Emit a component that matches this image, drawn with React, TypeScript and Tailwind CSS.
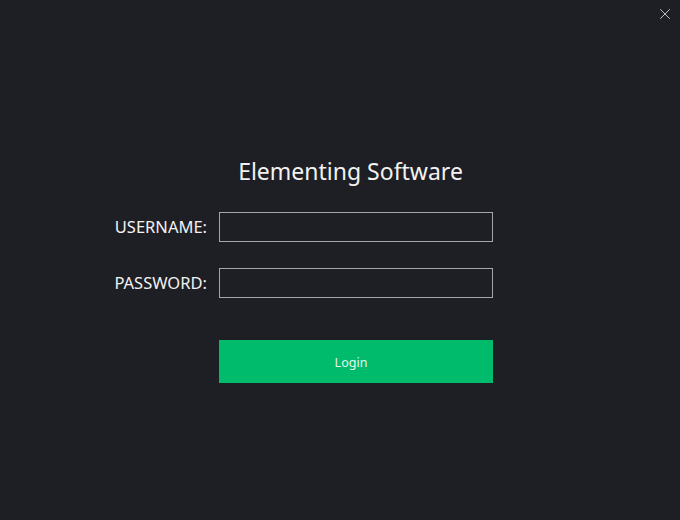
import { X } from 'lucide-react';

const fields = [
  { label: 'USERNAME:', type: 'text' },
  { label: 'PASSWORD:', type: 'password' },
];

export default function App() {
  return (
    <div
      className="relative w-[680px] h-[520px] bg-[#1e1f24] text-[#f2f2f2] overflow-hidden"
      style={{ fontFamily: '"Noto Sans", "Open Sans", sans-serif' }}
    >
      <button className="absolute top-[5px] right-[6px] text-[#c4c4c4]">
        <X className="h-[18px] w-[18px]" strokeWidth={1.3} />
      </button>

      <div className="flex flex-col pt-[155px]">
        <h1 className="pl-[21px] text-center text-[23px] leading-[32px] font-normal">Elementing Software</h1>

        <div className="mt-[25px] ml-[104px] grid grid-cols-[103px_274px] gap-x-[12px] gap-y-[26px] items-center">
          {fields.map((field) => (
            <div key={field.label} className="contents">
              <label className="text-right text-[16.5px] leading-[20px] -mt-[1px]">{field.label}</label>
              <input
                type={field.type}
                className="h-[30px] w-[274px] bg-transparent border border-[#a6a6a6] px-2 text-[14px] outline-none"
              />
            </div>
          ))}
        </div>

        <div className="ml-[219px] mt-[42px]">
          <button className="h-[43px] w-[274px] pr-[10px] pt-[3px] bg-[#00bb6c] text-[#e6f7ee] text-[12.5px]">Login</button>
        </div>
      </div>
    </div>
  );
}
